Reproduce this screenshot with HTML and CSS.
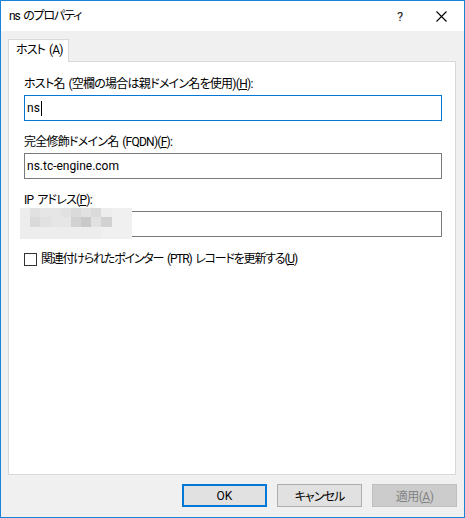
FILE: index.html
```html
<!DOCTYPE html>
<html lang="ja">
<head>
<meta charset="utf-8">
<title>ns のプロパティ</title>
<link rel="stylesheet" href="styles.css">
</head>
<body>
<div class="window">
  <div class="titlebar">
    <span class="title">ns のプロパティ</span>
    <span class="help">?</span>
    <span class="close">
      <svg width="11" height="11" viewBox="0 0 11 11"><path d="M0.5 0.5 L10.5 10.5 M10.5 0.5 L0.5 10.5" stroke="#000" stroke-width="1.1" fill="none"/></svg>
    </span>
  </div>
  <div class="content">
    <div class="tabs">
      <div class="tab">ホスト (A)</div>
    </div>
    <div class="panel">
      <div class="field">
        <div class="label">ホスト名 (空欄の場合は親ドメイン名を使用)(<u>H</u>):</div>
        <div class="input focused"><span>ns</span><span class="caret"></span></div>
      </div>
      <div class="field">
        <div class="label">完全修飾ドメイン名 (FQDN)(<u>F</u>):</div>
        <div class="input"><span>ns.tc-engine.com</span></div>
      </div>
      <div class="field">
        <div class="label">IP アドレス(<u>P</u>):</div>
        <div class="input ip">
          <div class="mosaic">
            <i class="m1"></i><i class="m3"></i><i class="m2"></i><i class="m2"></i><i class="m3"></i><i class="m4"></i><i class="m3"></i><i class="m4"></i><i class="m1"></i><i class="m0"></i><i class="m0"></i>
            <i class="m1"></i><i class="m4"></i><i class="m3"></i><i class="m2"></i><i class="m2"></i><i class="m5"></i><i class="m6"></i><i class="m3"></i><i class="m5"></i><i class="m0"></i><i class="m0"></i>
            <i class="m1"></i><i class="m1"></i><i class="m1"></i><i class="m1"></i><i class="m1"></i><i class="m1"></i><i class="m1"></i><i class="m1"></i><i class="m0"></i><i class="m0"></i><i class="m0"></i>
          </div>
        </div>
      </div>
      <label class="check">
        <span class="box"></span>
        <span class="check-text">関連付けられたポインター (PTR) レコードを更新する(<u>U</u>)</span>
      </label>
    </div>
  </div>
  <div class="footer">
    <button class="btn default">OK</button>
    <button class="btn">キャンセル</button>
    <button class="btn disabled">適用(<u>A</u>)</button>
  </div>
</div>
</body>
</html>
```
FILE: styles.css
```css
* { box-sizing: border-box; }
html, body { margin: 0; padding: 0; }
body {
  font-family: Roboto, "Noto Sans CJK JP", sans-serif;
  font-size: 12px;
  color: #000;
  font-feature-settings: "palt";
  letter-spacing: -0.75px;
  word-spacing: 1.5px;
}
.window {
  width: 465px;
  height: 518px;
  border: 1px solid #1883d7;
  background: #f0f0f0;
  display: flex;
  flex-direction: column;
}
.titlebar {
  height: 30px;
  background: #fff;
  display: flex;
  align-items: center;
  padding-left: 8px;
  flex: none;
}
.title { flex: 1; line-height: 16px; letter-spacing: -1.2px; word-spacing: 2px; }
.help { width: 16px; margin-right: 28px; text-align: center; font-size: 13px; letter-spacing: 0; color: #222; }
.close { width: 11px; margin-right: 17px; display: flex; }
.content {
  flex: 1;
  display: flex;
  flex-direction: column;
  padding: 8px 8px 0 7px;
}
.tabs { display: flex; height: 22px; flex: none; }
.tab {
  width: 61px;
  height: 23px;
  background: #fff;
  border: 1px solid #d9d9d9;
  border-bottom: none;
  padding-left: 7px;
  line-height: 20px;
  position: relative;
  z-index: 1;
  letter-spacing: -0.9px;
  word-spacing: 2px;
}
.panel {
  flex: 1;
  background: #fff;
  border: 1px solid #d9d9d9;
  padding: 14px 13px 0 15px;
  display: flex;
  flex-direction: column;
}
.field { margin-bottom: 13px; }
.label { line-height: 16px; height: 16px; margin-bottom: 3px; white-space: nowrap; }
.input {
  height: 26px;
  border: 1px solid #7a7a7a;
  display: flex;
  align-items: center;
  padding-left: 2px;
  position: relative;
  letter-spacing: 0;
  word-spacing: 0;
}
.input.focused { border-color: #0078d7; }
.caret { width: 1px; height: 15px; background: #000; margin-left: 1px; }
.mosaic {
  position: absolute;
  left: -5px;
  top: -4px;
  width: 112px;
  height: 31px;
  display: grid;
  grid-template-columns: repeat(11, 1fr);
  grid-template-rows: 9px 10px 12px;
}
.mosaic i { display: block; }
.m0 { background: #f0f0f0; }
.m1 { background: #ededed; }
.m2 { background: #e6e6e6; }
.m3 { background: #e1e1e1; }
.m4 { background: #dadada; }
.m5 { background: #d2d2d2; }
.m6 { background: #c9c9c9; }
.check {
  margin-top: 2px;
  display: flex;
  align-items: center;
  height: 14px;
  line-height: 16px;
}
.check-text { letter-spacing: -1.2px; word-spacing: 2px; white-space: nowrap; }
.box {
  width: 13px;
  height: 13px;
  border: 1px solid #333;
  background: #fff;
  margin-right: 4px;
}
.footer {
  height: 42px;
  flex: none;
  display: flex;
  justify-content: flex-end;
  gap: 10px;
  padding: 9px 7px 10px 0;
}
.btn {
  width: 85px;
  height: 23px;
  font: inherit;
  letter-spacing: -0.9px;
  background: #e1e1e1;
  border: 1px solid #adadad;
  padding: 0;
  color: #000;
}
.btn.default { border: 2px solid #0078d7; letter-spacing: 0; }
.btn.disabled { background: #cccccc; border-color: #bfbfbf; color: #838383; letter-spacing: -0.5px; }
```
